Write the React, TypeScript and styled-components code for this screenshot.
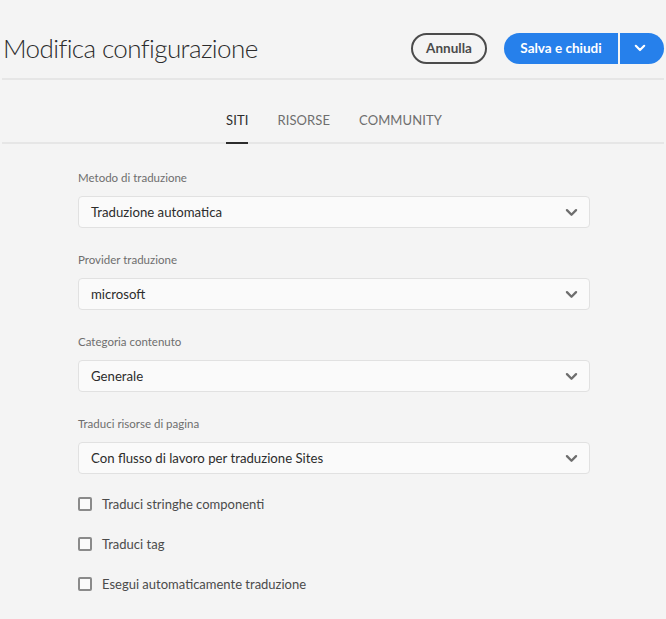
import styled, { createGlobalStyle } from 'styled-components';

const GlobalStyle = createGlobalStyle`
  html, body {
    margin: 0;
    padding: 0;
    background: #f4f4f4;
  }
  body {
    font-family: Lato, 'Open Sans', sans-serif;
    color: #2c2c2c;
  }
`;

const fields = [
  { label: 'Metodo di traduzione', value: 'Traduzione automatica' },
  { label: 'Provider traduzione', value: 'microsoft' },
  { label: 'Categoria contenuto', value: 'Generale' },
  { label: 'Traduci risorse di pagina', value: 'Con flusso di lavoro per traduzione Sites' }
];

const options = ['Traduci stringhe componenti', 'Traduci tag', 'Esegui automaticamente traduzione'];

const tabs = ['SITI', 'RISORSE', 'COMMUNITY'];

const Chevron = (props: { color: string; size: number }) => (
  <svg width={props.size} height={props.size} viewBox="0 0 10 10" fill="none">
    <path d="M1.5 3.2 L5 6.7 L8.5 3.2" stroke={props.color} strokeWidth="1.8" strokeLinecap="round" strokeLinejoin="round" />
  </svg>
);

export default function App() {
  return (
    <Page>
      <GlobalStyle />
      <Header>
        <Title>Modifica configurazione</Title>
        <Actions>
          <CancelButton>Annulla</CancelButton>
          <SplitButton>
            <PrimaryButton>Salva e chiudi</PrimaryButton>
            <MenuButton>
              <Chevron color="#ffffff" size={12} />
            </MenuButton>
          </SplitButton>
        </Actions>
      </Header>
      <TabBar>
        {tabs.map((t, i) => (
          <Tab key={t} selected={i === 0}>
            {t}
          </Tab>
        ))}
      </TabBar>
      <Form>
        {fields.map((f) => (
          <Field key={f.label}>
            <Label>{f.label}</Label>
            <Select>
              <span>{f.value}</span>
              <Chevron color="#6e6e6e" size={13} />
            </Select>
          </Field>
        ))}
        <Checks>
          {options.map((o) => (
            <CheckRow key={o}>
              <Box />
              <CheckLabel>{o}</CheckLabel>
            </CheckRow>
          ))}
        </Checks>
      </Form>
    </Page>
  );
}

const Page = styled.div`
  padding: 0 2px;
  min-height: 619px;
`;

const Header = styled.div`
  display: flex;
  align-items: center;
  justify-content: space-between;
  padding: 32px 0 14px;
  border-bottom: 2px solid #e6e6e6;
`;

const Title = styled.h1`
  margin: 0;
  font-family: Lato, sans-serif;
  font-weight: 300;
  font-size: 26px;
  letter-spacing: -0.6px;
  line-height: 32px;
  color: #2c2c2c;
  padding-left: 1px;
`;

const Actions = styled.div`
  display: flex;
  align-items: center;
  gap: 17px;
`;

const CancelButton = styled.button`
  height: 31px;
  width: 76px;
  box-sizing: border-box;
  border: 2px solid #4b4b4b;
  border-radius: 16px;
  background: transparent;
  color: #4b4b4b;
  font-family: Lato, sans-serif;
  font-weight: 700;
  font-size: 13.5px;
  padding: 0;
`;

const SplitButton = styled.div`
  display: flex;
  gap: 2px;
`;

const PrimaryButton = styled.button`
  height: 31px;
  width: 114px;
  border: none;
  border-radius: 16px 0 0 16px;
  background: #2680eb;
  color: #ffffff;
  font-family: Lato, sans-serif;
  font-weight: 700;
  font-size: 13.5px;
  padding: 0;
`;

const MenuButton = styled.button`
  height: 31px;
  width: 44px;
  border: none;
  border-radius: 0 16px 16px 0;
  background: #2680eb;
  display: flex;
  align-items: center;
  justify-content: center;
  padding: 0 4px 0 0;
`;

const TabBar = styled.div`
  display: flex;
  justify-content: center;
  gap: 29px;
  border-bottom: 2px solid #e6e6e6;
  padding-left: 2px;
`;

const Tab = styled.div<{ selected: boolean }>`
  padding: 32px 0 14px;
  line-height: 16px;
  font-size: 13px;
  letter-spacing: 0.1px;
  color: ${(p) => (p.selected ? '#2c2c2c' : '#6e6e6e')};
  border-bottom: 2px solid ${(p) => (p.selected ? '#2c2c2c' : 'transparent')};
  margin-bottom: -2px;
`;

const Form = styled.div`
  width: 512px;
  margin-left: 76px;
  padding-top: 26px;
  display: flex;
  flex-direction: column;
  gap: 24px;
`;

const Field = styled.div`
  display: flex;
  flex-direction: column;
  gap: 10px;
`;

const Label = styled.div`
  font-size: 11.5px;
  line-height: 16px;
  color: #6e6e6e;
`;

const Select = styled.div`
  height: 32px;
  box-sizing: border-box;
  border: 1px solid #e1e1e1;
  border-radius: 4px;
  background: #fafafa;
  display: flex;
  align-items: center;
  justify-content: space-between;
  padding: 0 11px 0 12px;
  font-size: 13.2px;
  color: #2c2c2c;
`;

const Checks = styled.div`
  display: flex;
  flex-direction: column;
  margin-top: -14px;
`;

const CheckRow = styled.div`
  height: 40px;
  display: flex;
  align-items: center;
  gap: 10px;
`;

const Box = styled.span`
  width: 14px;
  height: 14px;
  box-sizing: border-box;
  border: 2px solid #8a8a8a;
  border-radius: 2px;
  background: #fafafa;
`;

const CheckLabel = styled.span`
  font-size: 13px;
  color: #4b4b4b;
`;
